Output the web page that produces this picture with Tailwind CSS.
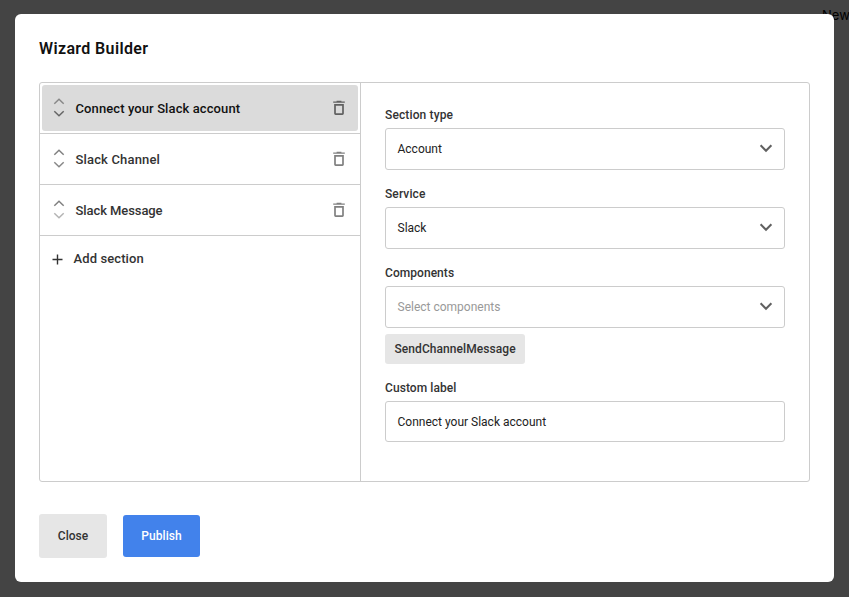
<!DOCTYPE html>
<html lang="en">
<head>
<meta charset="utf-8">
<title>Wizard Builder</title>
<script src="https://cdn.jsdelivr.net/npm/@tailwindcss/browser@4"></script>
</head>
<body class="relative h-[597px] w-[849px] overflow-hidden bg-[#444] font-['Roboto',sans-serif] text-[#333]">
<svg class="hidden">
  <symbol id="trash" viewBox="0 0 12 16"><path d="M0.2 2.1h11.6M3.6 1.4h4.8" fill="none" stroke="currentColor" stroke-width="1.3"/><path d="M2 4.8h8v8.7q0 .6-.6.6H2.6q-.6 0-.6-.6z" fill="none" stroke="currentColor" stroke-width="1.7"/></symbol>
  <symbol id="up" viewBox="0 0 12 7"><path d="M1.3 5.7 6 1.2l4.7 4.5" fill="none" stroke="currentColor" stroke-width="1.5"/></symbol>
  <symbol id="down" viewBox="0 0 12 7"><path d="M1.3 1.3 6 5.8l4.7-4.5" fill="none" stroke="currentColor" stroke-width="1.5"/></symbol>
  <symbol id="chevron" viewBox="0 0 14 9"><path d="M1.6 1.3 7 6.8l5.4-5.5" fill="none" stroke="currentColor" stroke-width="2"/></symbol>
</svg>
<span class="absolute left-[822px] top-[7px] font-['Inter',sans-serif] text-[13px] leading-4 text-black">New</span>
<main class="relative ml-[15px] mt-[14px] flex h-[568px] w-[819px] flex-col rounded-md bg-white px-6">
  <h1 class="mt-[23px] h-6 text-[16px] font-semibold leading-6 tracking-[0.37px] text-[#111]">Wizard Builder</h1>
  <div class="mt-[21px] flex h-[400px] w-[771px] shrink-0 rounded-[3px] border border-[#ccc]">
    <section class="w-[321px] border-r border-[#ccc] text-[13px] font-medium">
      <div class="h-[51px] border-b border-[#ccc] p-0.5">
        <div class="flex h-[46px] items-center rounded-[3px] bg-[#dbdbdb] pl-[11px] pr-[13px] text-[#111]">
          <div class="flex w-3 flex-col gap-[5px] pb-px"><svg class="h-[7px] w-3 text-[#888]"><use href="#up"/></svg><svg class="h-[7px] w-3 text-[#666]"><use href="#down"/></svg></div>
          <span class="ml-[10.5px] pt-0.5 tracking-[0.1px]">Connect your Slack account</span>
          <svg class="ml-auto h-4 w-3 text-[#606060]"><use href="#trash"/></svg>
        </div>
      </div>
      <div class="flex h-[51px] items-center border-b border-[#ccc] pl-[13px] pr-[15px]">
        <div class="flex w-3 flex-col gap-[5px] pb-px"><svg class="h-[7px] w-3 text-[#808080]"><use href="#up"/></svg><svg class="h-[7px] w-3 text-[#888]"><use href="#down"/></svg></div>
        <span class="ml-[10.5px] pt-0.5 tracking-[0.16px]">Slack Channel</span>
        <svg class="ml-auto h-4 w-3 text-[#808080]"><use href="#trash"/></svg>
      </div>
      <div class="flex h-[51px] items-center border-b border-[#ccc] pl-[13px] pr-[15px]">
        <div class="flex w-3 flex-col gap-[5px] pb-px"><svg class="h-[7px] w-3 text-[#808080]"><use href="#up"/></svg><svg class="h-[7px] w-3 text-[#b4b4b4]"><use href="#down"/></svg></div>
        <span class="ml-[10.5px] pt-0.5 tracking-[-0.08px]">Slack Message</span>
        <svg class="ml-auto h-4 w-3 text-[#808080]"><use href="#trash"/></svg>
      </div>
      <div class="flex h-[46px] items-center pl-[11.5px]">
        <svg class="size-[11px]" viewBox="0 0 11 11"><path d="M5.5 .5v10M.5 5.5h10" stroke="#333" stroke-width="1.4"/></svg>
        <span class="ml-[11px] tracking-[0.1px]">Add section</span>
      </div>
    </section>
    <section class="flex w-[448px] flex-col px-6 pt-6 text-[12px] leading-4">
      <label class="h-[21px] font-medium tracking-[0.13px]">Section type</label>
      <div class="flex h-[42px] items-center justify-between rounded-[3px] border border-[#ccc] pl-[11.5px] pr-[11px] text-[#222]"><span>Account</span><svg class="mb-0.5 h-[9px] w-[14px] text-[#606060]"><use href="#chevron"/></svg></div>
      <label class="mt-4 h-[21px] font-medium tracking-[0.1px]">Service</label>
      <div class="flex h-[42px] items-center justify-between rounded-[3px] border border-[#ccc] pl-[11.5px] pr-[11px] text-[#222]"><span>Slack</span><svg class="mb-0.5 h-[9px] w-[14px] text-[#606060]"><use href="#chevron"/></svg></div>
      <label class="mt-4 h-[21px] font-medium tracking-[0.05px]">Components</label>
      <div class="flex h-[42px] items-center justify-between rounded-[3px] border border-[#ccc] pl-[11.5px] pr-[11px] text-[#999]"><span>Select components</span><svg class="mb-0.5 h-[9px] w-[14px] text-[#606060]"><use href="#chevron"/></svg></div>
      <div class="mt-1.5 flex h-[30px] w-[140px] items-center rounded-[3px] bg-[#e6e6e6] pl-[9.5px] font-medium"><span class="tracking-[0.07px]">SendChannelMessage</span></div>
      <label class="mt-4 h-[21px] font-medium tracking-[0.08px]">Custom label</label>
      <div class="flex h-[41px] items-center rounded-[3px] border border-[#ccc] pl-[11.5px] text-[#222]"><span>Connect your Slack account</span></div>
    </section>
  </div>
  <div class="mt-8 flex items-center gap-4 text-[12px] font-medium">
    <button class="h-11 w-[68px] rounded-[3px] bg-[#e6e6e6]">Close</button>
    <button class="h-[42px] w-[77px] rounded-[3px] bg-[#4282eb] tracking-[0.1px] text-white">Publish</button>
  </div>
</main>
</body>
</html>
